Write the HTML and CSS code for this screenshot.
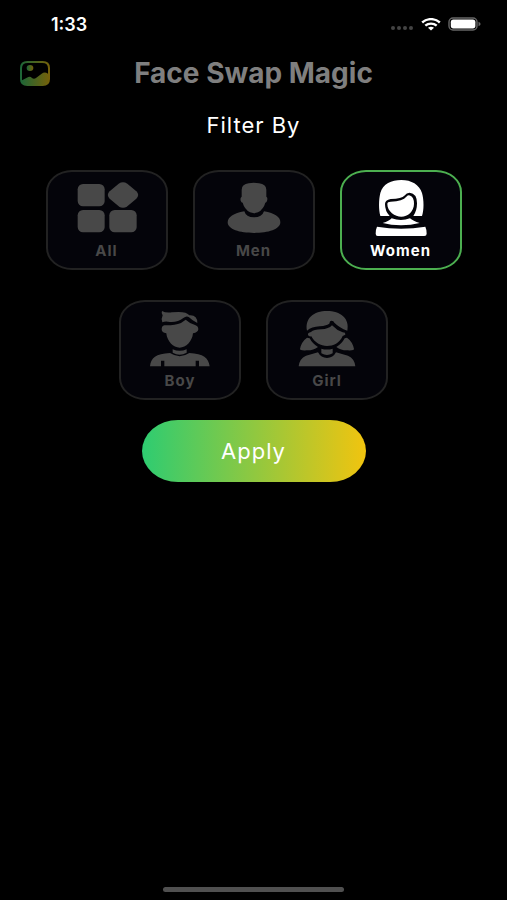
FILE: index.html
```
<!DOCTYPE html>
<html lang="en">
<head>
    <meta charset="UTF-8">
    <meta name="viewport" content="width=device-width, initial-scale=1.0">
    <title>Face Swap Magic</title>
    <link rel="stylesheet" href="styles.css">
</head>
<body>
    <div class="status-bar">
        <span class="time">1:33</span>
        <div class="status-icons">
            <svg class="signal" width="24" height="4" viewBox="0 0 24 4" fill="#444">
                <circle cx="3" cy="2" r="2"/><circle cx="9" cy="2" r="2"/><circle cx="15" cy="2" r="2"/><circle cx="21" cy="2" r="2"/>
            </svg>
            <svg width="20" height="13" viewBox="0 0 20 13" fill="none" stroke="#fff" stroke-width="2.4">
                <path d="M1.2 4.5C6 0 14 0 18.8 4.5"/>
                <path d="M4.3 7.7C7.5 4.9 12.5 4.9 15.7 7.7"/>
                <path d="M10 12.4L7 9.8Q10 7.8 13 9.8Z" fill="#fff" stroke="none"/>
            </svg>
            <svg width="33" height="14" viewBox="0 0 33 14">
                <rect x="1" y="1" width="28" height="12" rx="4" fill="none" stroke="#666" stroke-width="1.4"/>
                <rect x="2.8" y="2.6" width="24.6" height="8.8" rx="2.6" fill="#fff"/>
                <path d="M30.5 4.8Q32.6 5.6 32.6 7T30.5 9.2Z" fill="#666"/>
            </svg>
        </div>
    </div>

    <header class="header">
        <button class="gallery-btn" aria-label="Gallery">
            <svg width="30" height="25" viewBox="0 0 90 75">
                <defs>
                    <linearGradient id="gallery" x1="0" y1="0" x2="1" y2="0">
                        <stop offset="0" stop-color="#1b6638"/>
                        <stop offset="1" stop-color="#776109"/>
                    </linearGradient>
                </defs>
                <path fill="url(#gallery)" fill-rule="evenodd" d="M22 0H68Q90 0 90 21V54Q90 75 68 75H22Q0 75 0 54V21Q0 0 22 0ZM23 6Q6 6 6 22V58L25 48Q31 45 36 51Q42 56 49 50L65 38Q74 31 84 38V22Q84 6 67 6Z"/>
                <ellipse cx="30" cy="21" rx="10" ry="9" fill="url(#gallery)"/>
            </svg>
        </button>
        <h1 class="title">Face Swap Magic</h1>
    </header>

    <main class="content">
        <h2 class="subtitle">Filter By</h2>

        <div class="filters">
            <button class="filter">
                <svg width="66" height="60" viewBox="103 56 198 180" fill="currentColor">
                    <rect x="114" y="71" width="81" height="67" rx="16"/>
                    <rect x="114" y="149" width="81" height="67" rx="16"/>
                    <rect x="209" y="149" width="82" height="67" rx="16"/>
                    <path d="M237 70Q250 62 263 70L290 93Q301 104 290 115L263 138Q250 147 237 138L210 115Q199 104 210 93Z"/>
                </svg>
                <span>All</span>
            </button>

            <button class="filter">
                <svg width="66" height="60" viewBox="108 56 198 180" fill="currentColor">
                    <path d="M170 109V88Q171 71 191 69Q206 66 222 69Q243 71 244 88V109Q249 112 246 122Q244 127 241 127Q236 146 219 156Q207 161 195 156Q178 146 173 127Q169 127 167 121Q165 112 170 109Z"/>
                    <path d="M178 153Q183 171 207 171T237 153Q286 162 286 186C286 207 250 218 207 218S128 207 128 186Q129 162 178 153Z"/>
                </svg>
                <span>Men</span>
            </button>

            <button class="filter active">
                <svg width="66" height="60" viewBox="113 56 198 180" fill="currentColor">
                    <path d="M150 167C145 149 145 118 150 98C158 70 183 59 213 59S267 73 275 98C281 119 281 149 275 167H249Q260 151 260 129Q260 99 238 97Q229 97 222 106Q215 115 181 116Q164 119 164 131Q164 153 178 167Z"/>
                    <path d="M171 131Q171 124 181 124Q218 122 228 109Q234 103 240 106Q251 110 251 130C251 153 232 169 213 169S171 154 171 131Z"/>
                    <path d="M184 174Q212 184 239 174Q248 182 268 188Q242 195 212 195T157 188Q177 182 184 174Z"/>
                    <path d="M140 199Q212 211 285 199Q289 207 289 220Q289 227 282 227H142Q136 227 136 220Q136 207 140 199Z"/>
                </svg>
                <span>Women</span>
            </button>

            <button class="filter">
                <svg width="66" height="60" viewBox="113 56 198 180" fill="currentColor">
                    <path d="M159 96Q155 84 160 75Q155 68 158 62Q168 68 188 66Q230 61 240 75Q264 73 264 98Q249 91 239 81Q232 75 222 83Q203 98 176 94Q165 93 159 96Z"/>
                    <path d="M165 105Q195 106 215 98L229 88Q241 99 257 104Q267 107 267 117Q266 126 251 129C249 153 230 172 211 172S173 153 171 129Q157 127 157 117Q157 107 165 105Z"/>
                    <path d="M190 177Q211 186 232 177V187Q211 199 190 187Z"/>
                    <path d="M122 228C125 202 139 191 182 188Q211 207 240 188C283 191 297 202 301 228H269V211H259V228H165V211H155V228Z"/>
                </svg>
                <span>Boy</span>
            </button>

            <button class="filter">
                <svg width="66" height="60" viewBox="103 56 198 180" fill="currentColor">
                    <path d="M142 121C135 84 162 62 202 62S271 84 263 121Q239 112 224 97Q222 91 216 91Q209 91 210 99Q202 107 180 108Q156 109 142 121Z"/>
                    <path d="M154 125Q162 117 185 117Q207 116 217 105Q231 120 249 126L256 127L257 133L249 137C240 158 221 167 202 167S165 157 155 138Q146 139 145 133Q144 127 154 125Z"/>
                    <path d="M142 142L150 144Q158 160 175 170Q160 181 141 180Q120 181 121 176Q125 154 142 142Z"/>
                    <path d="M262 142L255 144Q247 160 230 170Q245 181 264 180Q284 181 283 176Q279 154 262 142Z"/>
                    <path d="M185 175Q202 180 219 175V189Q202 199 185 189Z"/>
                    <path d="M117 228Q119 205 139 196L175 186Q184 203 202 203T229 186L265 196Q285 205 287 228Z"/>
                </svg>
                <span>Girl</span>
            </button>
        </div>

        <button class="apply-btn">Apply</button>
    </main>

    <div class="home-indicator"></div>
</body>
</html>
```
FILE: styles.css
```
* {
    box-sizing: border-box;
}
body {
    margin: 0;
    min-height: 100vh;
    display: flex;
    flex-direction: column;
    background: #000;
    color: #fff;
    font-family: Inter, "Liberation Sans", sans-serif;
}
button {
    padding: 0;
    border: none;
    background: none;
    color: inherit;
    font-family: inherit;
    cursor: pointer;
}
svg {
    display: block;
}
.status-bar {
    display: flex;
    justify-content: space-between;
    align-items: center;
    height: 48px;
    padding: 0 26px 0 51px;
}
.time {
    font-size: 18px;
    font-weight: 600;
}
.status-icons {
    display: flex;
    align-items: center;
    gap: 7px;
}
.signal {
    margin-top: 8px;
}
.header {
    display: grid;
    grid-template-columns: 30px 1fr 30px;
    align-items: center;
    height: 50px;
    padding: 0 20px;
}
.title {
    margin: 0;
    text-align: center;
    font-size: 28px;
    font-weight: 700;
    line-height: 32px;
    color: #7f7f7f;
}
.content {
    display: flex;
    flex-direction: column;
    align-items: center;
    padding: 12px 40px;
}
.subtitle {
    margin: 0 0 30px;
    font-size: 22px;
    font-weight: 400;
    line-height: 30px;
    letter-spacing: 1px;
}
.filters {
    display: flex;
    flex-wrap: wrap;
    justify-content: center;
    gap: 30px 25px;
    margin-bottom: 20px;
}
.filter {
    display: flex;
    flex-direction: column;
    align-items: center;
    width: 122px;
    height: 100px;
    padding-top: 7px;
    border: 2px solid #222;
    border-radius: 26px / 22px;
    background: #04040a;
    color: #484848;
    font-size: 15px;
    font-weight: 700;
    line-height: 20px;
    letter-spacing: 1px;
}
.filter span {
    margin-top: 2px;
}
.filter.active {
    border-color: #4caf50;
    color: #fff;
}
.apply-btn {
    width: 224px;
    height: 62px;
    border-radius: 36px / 31px;
    background: linear-gradient(to right, #2ecc71, #f1c40f);
    font-size: 22px;
    letter-spacing: 1px;
}
.home-indicator {
    width: 181px;
    height: 5px;
    margin: auto auto 8px;
    border-radius: 3px;
    background: #505050;
}
```
